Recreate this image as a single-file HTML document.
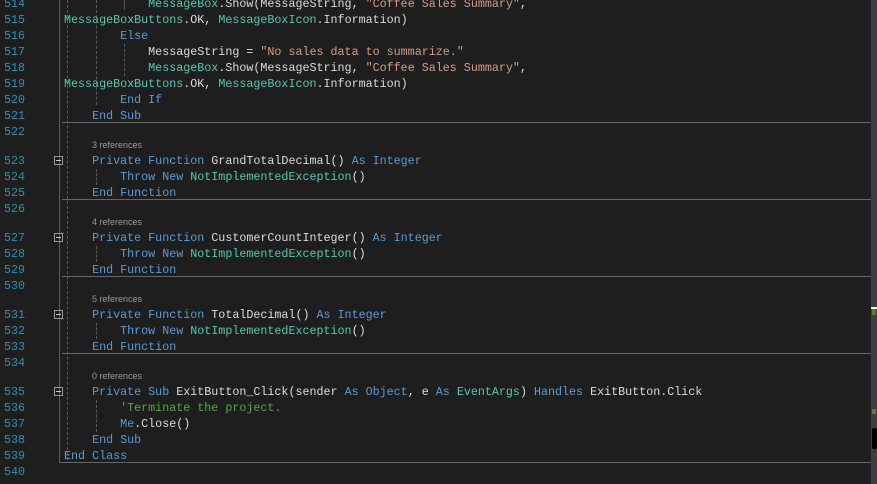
<!DOCTYPE html>
<html><head><style>
body{margin:0;width:877px;height:484px;background:#1e1e1e;overflow:hidden;position:relative;font-family:"Liberation Mono",monospace;font-size:11.7px;color:#dcdcdc}
.l{position:absolute;left:64px;height:16px;line-height:16px;white-space:pre}
.n{position:absolute;left:0;width:25px;text-align:right;height:16px;line-height:16px;color:#2b91af;font-size:11.7px}
.k{color:#569cd6}.t{color:#4ec9b0}.s{color:#d69d85}.c{color:#57a64a}
.lens{position:absolute;left:92px;height:13px;line-height:13px;font-family:"Liberation Sans",sans-serif;font-size:9px;color:#999}
.sep{position:absolute;left:62px;width:809px;height:1px;background:#666}
.g{position:absolute;width:0;border-left:1px dashed #5a5a5a}
.box{position:absolute;left:54px;width:7px;height:7px;border:1px solid #999;}
.box:after{content:"";position:absolute;left:1px;top:3px;width:5px;height:1px;background:#ccc}
.sb{position:absolute;left:871px;top:0;width:6px;height:484px;background:#3e3e42}
</style></head><body>
<div style="position:absolute;left:59px;top:0;width:1px;height:462px;background:#5a5a5a"></div>
<div class="g" style="left:67px;top:0;height:460px"></div>
<div class="g" style="left:96px;top:0;height:105px"></div>
<div class="g" style="left:124px;top:0;height:10px"></div>
<div class="g" style="left:124px;top:44px;height:32px"></div>
<div class="g" style="left:96px;top:169px;height:16px"></div>
<div class="g" style="left:96px;top:246px;height:16px"></div>
<div class="g" style="left:96px;top:323px;height:16px"></div>
<div class="g" style="left:96px;top:400px;height:32px"></div>

<div class="n" style="top:-4px">514</div><div class="l" style="top:-4px">            <span class="t">MessageBox</span>.Show(MessageString, <span class="s">"Coffee Sales Summary"</span>,</div>
<div class="n" style="top:12px">515</div><div class="l" style="top:12px"><span class="t">MessageBoxButtons</span>.OK, <span class="t">MessageBoxIcon</span>.Information)</div>
<div class="n" style="top:28px">516</div><div class="l" style="top:28px">        <span class="k">Else</span></div>
<div class="n" style="top:44px">517</div><div class="l" style="top:44px">            MessageString = <span class="s">"No sales data to summarize."</span></div>
<div class="n" style="top:60px">518</div><div class="l" style="top:60px">            <span class="t">MessageBox</span>.Show(MessageString, <span class="s">"Coffee Sales Summary"</span>,</div>
<div class="n" style="top:76px">519</div><div class="l" style="top:76px"><span class="t">MessageBoxButtons</span>.OK, <span class="t">MessageBoxIcon</span>.Information)</div>
<div class="n" style="top:92px">520</div><div class="l" style="top:92px">        <span class="k">End If</span></div>
<div class="n" style="top:108px">521</div><div class="l" style="top:108px">    <span class="k">End Sub</span></div>
<div class="sep" style="top:122px"></div>
<div class="n" style="top:124px">522</div>
<div class="lens" style="top:139px">3 references</div>
<div class="n" style="top:153px">523</div><div class="box" style="top:156px"></div><div class="l" style="top:153px">    <span class="k">Private Function</span> GrandTotalDecimal() <span class="k">As Integer</span></div>
<div class="n" style="top:169px">524</div><div class="l" style="top:169px">        <span class="k">Throw New</span> <span class="t">NotImplementedException</span>()</div>
<div class="n" style="top:185px">525</div><div class="l" style="top:185px">    <span class="k">End Function</span></div>
<div class="sep" style="top:199px"></div>
<div class="n" style="top:201px">526</div>
<div class="lens" style="top:216px">4 references</div>
<div class="n" style="top:230px">527</div><div class="box" style="top:233px"></div><div class="l" style="top:230px">    <span class="k">Private Function</span> CustomerCountInteger() <span class="k">As Integer</span></div>
<div class="n" style="top:246px">528</div><div class="l" style="top:246px">        <span class="k">Throw New</span> <span class="t">NotImplementedException</span>()</div>
<div class="n" style="top:262px">529</div><div class="l" style="top:262px">    <span class="k">End Function</span></div>
<div class="sep" style="top:276px"></div>
<div class="n" style="top:278px">530</div>
<div class="lens" style="top:293px">5 references</div>
<div class="n" style="top:307px">531</div><div class="box" style="top:310px"></div><div class="l" style="top:307px">    <span class="k">Private Function</span> TotalDecimal() <span class="k">As Integer</span></div>
<div class="n" style="top:323px">532</div><div class="l" style="top:323px">        <span class="k">Throw New</span> <span class="t">NotImplementedException</span>()</div>
<div class="n" style="top:339px">533</div><div class="l" style="top:339px">    <span class="k">End Function</span></div>
<div class="sep" style="top:353px"></div>
<div class="n" style="top:355px">534</div>
<div class="lens" style="top:370px">0 references</div>
<div class="n" style="top:384px">535</div><div class="box" style="top:387px"></div><div class="l" style="top:384px">    <span class="k">Private Sub</span> ExitButton_Click(sender <span class="k">As</span> <span class="k">Object</span>, e <span class="k">As</span> <span class="t">EventArgs</span>) <span class="k">Handles</span> ExitButton.Click</div>
<div class="n" style="top:400px">536</div><div class="l" style="top:400px">        <span class="c">'Terminate the project.</span></div>
<div class="n" style="top:416px">537</div><div class="l" style="top:416px">        <span class="k">Me</span>.Close()</div>
<div class="n" style="top:432px">538</div><div class="l" style="top:432px">    <span class="k">End Sub</span></div>
<div class="n" style="top:448px">539</div><div class="l" style="top:448px"><span class="k">End Class</span></div>
<div class="sep" style="top:462px;left:59px;width:812px"></div>
<div class="n" style="top:464px">540</div>

<div class="sb"></div>
<div style="position:absolute;left:871px;top:307px;width:6px;height:2px;background:#eee"></div>
<div style="position:absolute;left:872px;top:309px;width:4px;height:6px;background:#5c7c2e"></div>
<div style="position:absolute;left:872px;top:409px;width:4px;height:5px;background:#5c7c2e"></div>
<div style="position:absolute;left:872px;top:428px;width:5px;height:21px;background:#000;border-radius:2px"></div>
</body></html>
